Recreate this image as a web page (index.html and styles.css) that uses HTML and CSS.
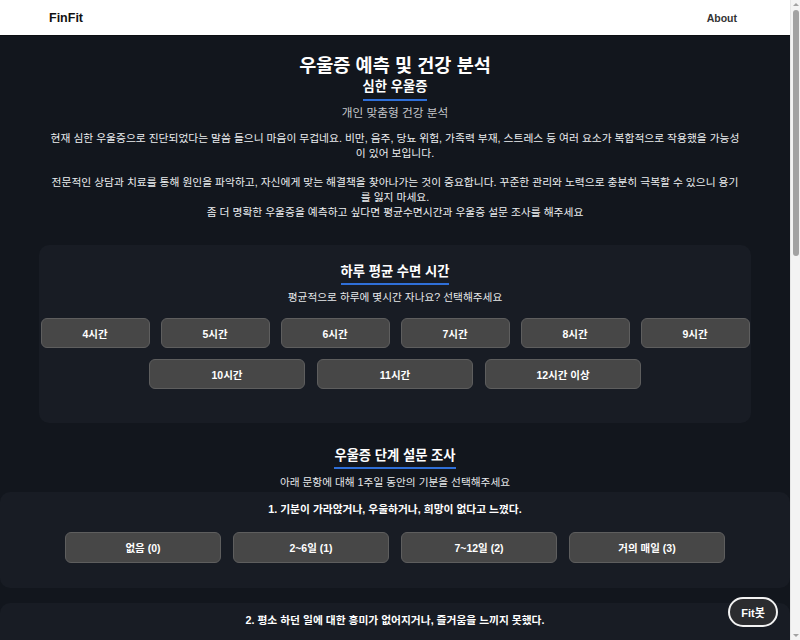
FILE: index.html
```html
<!DOCTYPE html>
<html lang="ko">
<head>
<meta charset="utf-8">
<title>FinFit</title>
<link rel="stylesheet" href="styles.css">
</head>
<body>
<header class="topbar">
  <div class="brand">FinFit</div>
  <nav class="nav"><a class="nav-link" href="#">About</a></nav>
</header>

<main class="page">
  <section class="result">
    <h1 class="result-title">우울증 예측 및 건강 분석</h1>
    <div class="result-level-wrap"><span class="result-level">심한 우울증</span></div>
    <p class="result-sub">개인 맞춤형 건강 분석</p>
    <p class="result-text">현재 심한 우울증으로 진단되었다는 말씀 들으니 마음이 무겁네요. 비만, 음주, 당뇨 위험, 가족력 부재, 스트레스 등 여러 요소가 복합적으로 작용했을 가능성이 있어 보입니다.</p>
    <p class="result-text second">전문적인 상담과 치료를 통해 원인을 파악하고, 자신에게 맞는 해결책을 찾아나가는 것이 중요합니다. 꾸준한 관리와 노력으로 충분히 극복할 수 있으니 용기를 잃지 마세요.<br>좀 더 명확한 우울증을 예측하고 싶다면 평균수면시간과 우울증 설문 조사를 해주세요</p>
  </section>

  <section class="sleep-card">
    <div class="sec-title-wrap"><h2 class="sec-title">하루 평균 수면 시간</h2></div>
    <p class="sec-sub">평균적으로 하루에 몇시간 자나요? 선택해주세요</p>
    <div class="btn-row">
      <button class="opt opt-sm">4시간</button>
      <button class="opt opt-sm">5시간</button>
      <button class="opt opt-sm">6시간</button>
      <button class="opt opt-sm">7시간</button>
      <button class="opt opt-sm">8시간</button>
      <button class="opt opt-sm">9시간</button>
    </div>
    <div class="btn-row row2">
      <button class="opt">10시간</button>
      <button class="opt">11시간</button>
      <button class="opt">12시간 이상</button>
    </div>
  </section>

  <section class="survey">
    <div class="sec-title-wrap"><h2 class="sec-title">우울증 단계 설문 조사</h2></div>
    <p class="sec-sub">아래 문항에 대해 1주일 동안의 기분을 선택해주세요</p>

    <div class="q-card">
      <p class="q-text">1. 기분이 가라앉거나, 우울하거나, 희망이 없다고 느꼈다.</p>
      <div class="btn-row"><button class="opt">없음 (0)</button><button class="opt">2~6일 (1)</button><button class="opt">7~12일 (2)</button><button class="opt">거의 매일 (3)</button></div>
    </div>
    <div class="q-card">
      <p class="q-text">2. 평소 하던 일에 대한 흥미가 없어지거나, 즐거움을 느끼지 못했다.</p>
      <div class="btn-row"><button class="opt">없음 (0)</button><button class="opt">2~6일 (1)</button><button class="opt">7~12일 (2)</button><button class="opt">거의 매일 (3)</button></div>
    </div>
    <div class="q-card">
      <p class="q-text">3. 잠들기가 어렵거나 자주 깼다, 혹은 너무 많이 잤다.</p>
      <div class="btn-row"><button class="opt">없음 (0)</button><button class="opt">2~6일 (1)</button><button class="opt">7~12일 (2)</button><button class="opt">거의 매일 (3)</button></div>
    </div>
    <div class="q-card">
      <p class="q-text">4. 평소보다 식욕이 줄었다, 혹은 평소보다 많이 먹었다.</p>
      <div class="btn-row"><button class="opt">없음 (0)</button><button class="opt">2~6일 (1)</button><button class="opt">7~12일 (2)</button><button class="opt">거의 매일 (3)</button></div>
    </div>
    <div class="q-card">
      <p class="q-text">5. 말과 행동이 평소보다 느려졌다, 혹은 안절부절 못해서 가만히 있을 수 없었다.</p>
      <div class="btn-row"><button class="opt">없음 (0)</button><button class="opt">2~6일 (1)</button><button class="opt">7~12일 (2)</button><button class="opt">거의 매일 (3)</button></div>
    </div>
    <div class="q-card">
      <p class="q-text">6. 피곤하고 기운이 없었다.</p>
      <div class="btn-row"><button class="opt">없음 (0)</button><button class="opt">2~6일 (1)</button><button class="opt">7~12일 (2)</button><button class="opt">거의 매일 (3)</button></div>
    </div>
    <div class="q-card">
      <p class="q-text">7. 내가 잘못했거나, 실패했다는 생각이 들었다.</p>
      <div class="btn-row"><button class="opt">없음 (0)</button><button class="opt">2~6일 (1)</button><button class="opt">7~12일 (2)</button><button class="opt">거의 매일 (3)</button></div>
    </div>
    <div class="q-card">
      <p class="q-text">8. 일상적인 일에도 집중할 수가 없었다.</p>
      <div class="btn-row"><button class="opt">없음 (0)</button><button class="opt">2~6일 (1)</button><button class="opt">7~12일 (2)</button><button class="opt">거의 매일 (3)</button></div>
    </div>
    <div class="q-card">
      <p class="q-text">9. 차라리 죽는 것이 더 낫겠다고 생각했다.</p>
      <div class="btn-row"><button class="opt">없음 (0)</button><button class="opt">2~6일 (1)</button><button class="opt">7~12일 (2)</button><button class="opt">거의 매일 (3)</button></div>
    </div>

    <div class="submit-wrap"><button class="submit">결과 확인</button></div>
  </section>
</main>

<button class="fitbot">Fit봇</button>

<div class="scrollbar" aria-hidden="true">
  <span class="sb-arrow sb-up"></span>
  <span class="sb-thumb"></span>
  <span class="sb-arrow sb-down"></span>
</div>
</body>
</html>
```

FILE: styles.css
```css
html {
  background: #12161d;
}
body {
  margin: 0 10px 0 0;
  background: #12161d;
  color: #ffffff;
  font-family: "Liberation Sans", "Noto Sans CJK KR", sans-serif;
  font-size: 10.5px;
}
.topbar {
  height: 35px;
  background: #ffffff;
  border-bottom: 1px solid #0c0e12;
  display: flex;
  align-items: center;
  justify-content: space-between;
  padding: 0 53px 0 49px;
}
.brand {
  color: #111111;
  font-weight: bold;
  font-size: 12.5px;
}
.nav-link {
  color: #333333;
  font-weight: bold;
  font-size: 10.5px;
  text-decoration: none;
}
.page {
  padding-bottom: 150px;
}
.result {
  text-align: center;
  max-width: 693px;
  margin: 0 auto;
}
.result-title {
  margin: 19px 0 2px;
  font-size: 18.6px;
  line-height: 22px;
  font-weight: bold;
  color: #ffffff;
}
.result-level-wrap {
  line-height: 0;
}
.result-level {
  display: inline-block;
  font-size: 13.3px;
  line-height: 16px;
  font-weight: bold;
  color: #ffffff;
  padding-bottom: 4px;
  border-bottom: 2px solid #2f6fd8;
}
.result-sub {
  margin: 5px 0 0;
  font-size: 11.7px;
  line-height: 14px;
  color: #c4c6ca;
}
.result-text {
  margin: 10.5px 0 0;
  font-size: 10.78px;
  line-height: 15px;
  color: #eceef0;
}
.result-text.second {
  margin-top: 14px;
}
.sleep-card {
  width: 712px;
  margin: 25.5px auto 0;
  box-sizing: border-box;
  background: #181c24;
  border-radius: 10px;
  padding: 19px 0 34px;
  text-align: center;
}
.sec-title-wrap {
  line-height: 0;
}
.sec-title {
  display: inline-block;
  margin: 0;
  font-size: 13.3px;
  line-height: 16px;
  font-weight: bold;
  color: #ffffff;
  padding-bottom: 3px;
  border-bottom: 2px solid #2f6fd8;
}
.sec-sub {
  margin: 5px 0 0;
  font-size: 10.7px;
  line-height: 14px;
  color: #e6e8ea;
}
.btn-row {
  display: flex;
  justify-content: center;
  gap: 12px;
}
.sleep-card .btn-row {
  margin-top: 14px;
  gap: 11px;
}
.sleep-card .btn-row.row2 {
  margin-top: 11px;
  gap: 12px;
}
.opt {
  width: 156px;
  height: 30px;
  box-sizing: border-box;
  background: #474747;
  border: 1px solid #5e5e5e;
  border-radius: 6px;
  color: #ffffff;
  font-family: "Liberation Sans", "Noto Sans CJK KR", sans-serif;
  font-size: 10.5px;
  font-weight: bold;
  padding: 0;
}
.opt-sm {
  width: 109px;
}
.survey {
  margin-top: 25px;
  text-align: center;
}
.survey > .sec-title-wrap .sec-title {
  padding-bottom: 3px;
}
.survey > .sec-sub {
  margin-top: 6px;
}
.q-card {
  margin-top: 15px;
  background: #181c24;
  border-radius: 10px;
  padding: 10px 0 25px;
}
.survey > .sec-sub + .q-card {
  margin-top: 3px;
}
.q-text {
  margin: 0 0 16px;
  font-size: 10.75px;
  line-height: 14px;
  font-weight: bold;
  color: #ffffff;
}
.q-card .opt {
  height: 31px;
}
.submit-wrap {
  margin-top: 24px;
}
.submit {
  width: 200px;
  height: 34px;
  background: #2f6fd8;
  border: none;
  border-radius: 6px;
  color: #ffffff;
  font-family: "Liberation Sans", "Noto Sans CJK KR", sans-serif;
  font-size: 11px;
  font-weight: bold;
}
.fitbot {
  position: fixed;
  right: 22px;
  bottom: 13px;
  width: 50px;
  height: 30px;
  box-sizing: border-box;
  border: 2px solid #f2f2f2;
  border-radius: 15px;
  background: #2b2c2f;
  color: #ffffff;
  font-family: "Liberation Sans", "Noto Sans CJK KR", sans-serif;
  font-size: 11px;
  font-weight: bold;
  padding: 0;
}
.scrollbar {
  position: fixed;
  top: 0;
  right: 0;
  bottom: 0;
  width: 10px;
  background: #f3f3f3;
  border-left: 1px solid #e6e6e6;
  box-sizing: border-box;
}
.sb-thumb {
  position: absolute;
  left: 2px;
  right: 1px;
  top: 10px;
  height: 246px;
  background: #a2a2a2;
  border-radius: 3px;
}
.sb-arrow {
  position: absolute;
  left: 2px;
  width: 0;
  height: 0;
  border-left: 3px solid transparent;
  border-right: 3px solid transparent;
}
.sb-up {
  top: 3px;
  border-bottom: 3px solid #a2a2a2;
}
.sb-down {
  bottom: 3px;
  border-top: 3px solid #a2a2a2;
}
```
